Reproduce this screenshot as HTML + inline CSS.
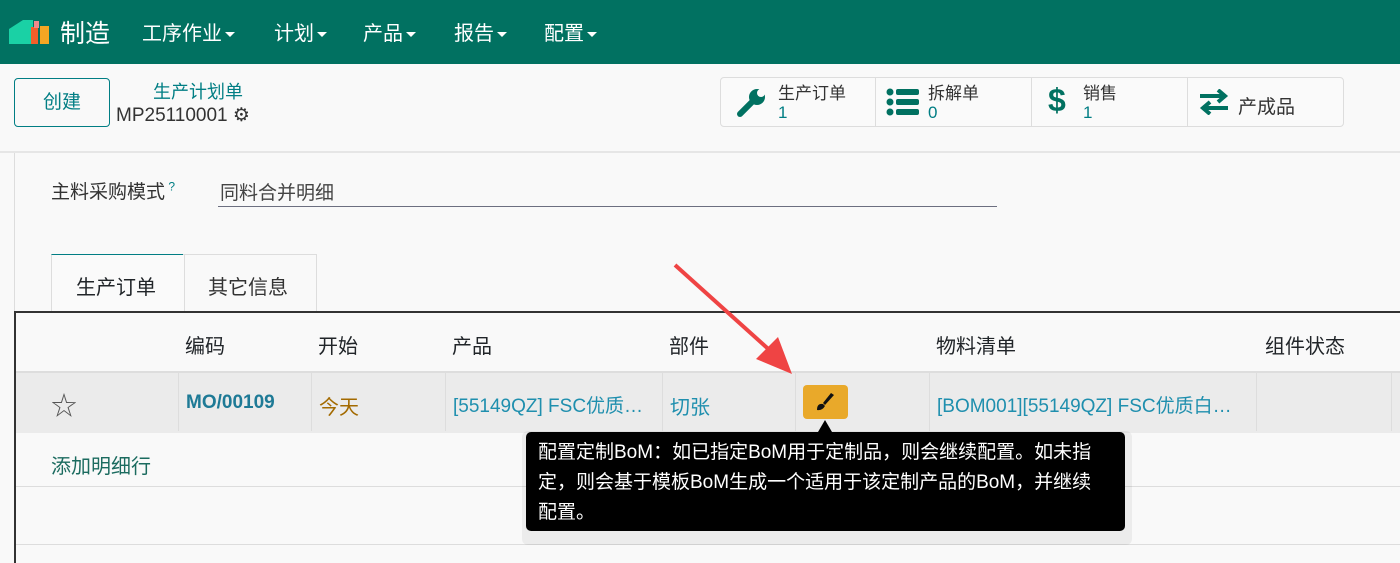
<!DOCTYPE html>
<html><head><meta charset="utf-8"><style>
body{margin:0;width:1400px;height:550px;overflow:hidden;background:#f9f9f9;font-family:"Liberation Sans","Noto Sans CJK SC",sans-serif;position:relative;color:#212529}
.a{position:absolute;white-space:nowrap}
.nav{position:absolute;left:0;top:0;width:1400px;height:64px;background:#017161}
.nav .a{color:#fff;font-size:20px;top:17px}
.car{display:inline-block;border-left:5px solid transparent;border-right:5px solid transparent;border-top:5px solid #fff;vertical-align:middle;margin-left:3px}
.teal{color:#017e84}
</style></head><body>
<div class="nav">
 <svg class="a" style="left:9px;top:17px" width="42" height="28"><polygon points="0,12 14,3 14,27 0,27" fill="#1ad1a5"/><rect x="14" y="3" width="10" height="24" fill="#1ad1a5"/><rect x="22" y="10" width="7" height="17" fill="#f25f2a"/><rect x="25" y="4" width="5" height="7" fill="#f08b8b"/><rect x="31" y="9" width="9" height="18" fill="#f5a623"/></svg>
 <div class="a" style="left:60px;top:14px;font-size:25px">制造</div>
 <div class="a" style="left:142px">工序作业<span class="car"></span></div>
 <div class="a" style="left:274px">计划<span class="car"></span></div>
 <div class="a" style="left:363px">产品<span class="car"></span></div>
 <div class="a" style="left:454px">报告<span class="car"></span></div>
 <div class="a" style="left:544px">配置<span class="car"></span></div>
</div>
<div class="a" style="left:14px;top:78px;width:94px;height:47px;border:1px solid #017e84;border-radius:4px;text-align:center;line-height:47px;font-size:19px;color:#017e84">创建</div>
<div class="a" style="left:153px;top:78px;font-size:18px;color:#017e84">生产计划单</div>
<div class="a" style="left:116px;top:104px;font-size:19px;color:#333">MP25110001 <span style="font-size:19px">⚙</span></div>
<div class="a" style="left:720px;top:77px;width:622px;height:48px;border:1px solid #ddd;border-radius:4px;background:#fafafa"></div>
<div class="a" style="left:875px;top:78px;width:1px;height:48px;background:#ddd"></div>
<div class="a" style="left:1031px;top:78px;width:1px;height:48px;background:#ddd"></div>
<div class="a" style="left:1187px;top:78px;width:1px;height:48px;background:#ddd"></div>
<svg class="a" style="left:736px;top:86px" width="32" height="32" viewBox="0 0 32 32"><path d="M4 28 L16 16" stroke="#017161" stroke-width="6" stroke-linecap="round"/><circle cx="21" cy="11" r="8" fill="#017161"/><circle cx="25" cy="7" r="4" fill="#fafafa"/></svg>
<div class="a" style="left:778px;top:84px;font-size:17px;line-height:19px;color:#333">生产订单<br><span class="teal">1</span></div>
<svg class="a" style="left:886px;top:88px" width="34" height="28"><circle cx="4" cy="4" r="3.5" fill="#017161"/><circle cx="4" cy="14" r="3.5" fill="#017161"/><circle cx="4" cy="24" r="3.5" fill="#017161"/><rect x="10" y="1" width="23" height="6" rx="2" fill="#017161"/><rect x="10" y="11" width="23" height="6" rx="2" fill="#017161"/><rect x="10" y="21" width="23" height="6" rx="2" fill="#017161"/></svg>
<div class="a" style="left:928px;top:84px;font-size:17px;line-height:19px;color:#333">拆解单<br><span class="teal">0</span></div>
<div class="a" style="left:1048px;top:82px;font-size:32px;font-weight:bold;color:#017161">$</div>
<div class="a" style="left:1083px;top:84px;font-size:17px;line-height:19px;color:#333">销售<br><span class="teal">1</span></div>
<svg class="a" style="left:1198px;top:89px" width="32" height="26"><path d="M2 7 H26 M20 1 L27 7 L20 13" stroke="#017161" stroke-width="4" fill="none"/><path d="M30 19 H6 M12 13 L5 19 L12 25" stroke="#017161" stroke-width="4" fill="none"/></svg>
<div class="a" style="left:1238px;top:92px;font-size:19px;color:#333">产成品</div>
<div class="a" style="left:0;top:151px;width:1400px;height:2px;background:#e6e6e6"></div>
<div class="a" style="left:14px;top:153px;width:1px;height:160px;background:#ddd"></div>
<div class="a" style="left:51px;top:177px;font-size:19px;color:#333">主料采购模式<sup style="color:#017e84;font-size:12px"> ?</sup></div>
<div class="a" style="left:220px;top:178px;font-size:19px;color:#444">同料合并明细</div>
<div class="a" style="left:218px;top:206px;width:779px;height:1px;background:#6c6f80"></div>
<div class="a" style="left:51px;top:254px;width:132px;height:58px;border:1px solid #ddd;border-top-color:#017e84;border-bottom:none;background:#fafafa"></div>
<div class="a" style="left:183px;top:254px;width:133px;height:58px;border:1px solid #ddd;border-left:none;border-bottom:none"></div>
<div class="a" style="left:76px;top:271px;font-size:20px">生产订单</div>
<div class="a" style="left:208px;top:271px;font-size:20px;color:#333">其它信息</div>
<div class="a" style="left:14px;top:311px;width:1390px;height:250px;border-top:2px solid #333;border-left:2px solid #333"></div>
<div class="a" style="left:16px;top:371px;width:1384px;height:60px;background:#ebebeb;border-top:2px solid #ddd"></div>
<div class="a" style="left:16px;top:486px;width:1384px;height:1px;background:#ddd"></div>
<div class="a" style="left:16px;top:544px;width:1384px;height:1px;background:#ddd"></div>
<div class="a" style="top:330px;left:185px;font-size:20px">编码</div>
<div class="a" style="top:330px;left:318px;font-size:20px">开始</div>
<div class="a" style="top:330px;left:452px;font-size:20px">产品</div>
<div class="a" style="top:330px;left:669px;font-size:20px">部件</div>
<div class="a" style="top:330px;left:936px;font-size:20px">物料清单</div>
<div class="a" style="top:330px;left:1265px;font-size:20px">组件状态</div>
<div class="a" style="left:178px;top:373px;width:1px;height:58px;background:#ddd"></div>
<div class="a" style="left:311px;top:373px;width:1px;height:58px;background:#ddd"></div>
<div class="a" style="left:445px;top:373px;width:1px;height:58px;background:#ddd"></div>
<div class="a" style="left:662px;top:373px;width:1px;height:58px;background:#ddd"></div>
<div class="a" style="left:795px;top:373px;width:1px;height:58px;background:#ddd"></div>
<div class="a" style="left:929px;top:373px;width:1px;height:58px;background:#ddd"></div>
<div class="a" style="left:1256px;top:373px;width:1px;height:58px;background:#ddd"></div>
<div class="a" style="left:1391px;top:373px;width:1px;height:58px;background:#ddd"></div>
<div class="a" style="left:51px;top:386px;font-size:26px;color:#555">☆</div>
<div class="a" style="left:186px;top:392px;font-size:19px;font-weight:bold;color:#1e7a96">MO/00109</div>
<div class="a" style="left:319px;top:391px;font-size:20px;color:#a36a00">今天</div>
<div class="a" style="left:453px;top:391px;font-size:19px;color:#1f8fae">[55149QZ] FSC优质…</div>
<div class="a" style="left:670px;top:391px;font-size:20px;color:#1f8fae">切张</div>
<div class="a" style="left:803px;top:385px;width:45px;height:34px;background:#e9a92a;border-radius:4px"></div>
<svg class="a" style="left:813px;top:391px" width="24" height="22"><path d="M18 2 L21 4 L12 14 L10 12Z" fill="#111"/><path d="M10 13 Q4 12 4 19 Q9 20 12 15Z" fill="#111"/></svg>
<div class="a" style="left:937px;top:391px;font-size:19px;color:#1f8fae">[BOM001][55149QZ] FSC优质白…</div>
<div class="a" style="left:51px;top:450px;font-size:20px;color:#1b6b5f">添加明细行</div>
<div class="a" style="left:522px;top:431px;width:610px;height:114px;background:rgba(0,0,0,0.05);border-radius:6px"></div>
<div class="a" style="left:526px;top:432px;width:599px;height:99px;background:#000;border-radius:5px"></div>
<div class="a" style="left:818px;top:420px;border-left:7px solid transparent;border-right:7px solid transparent;border-bottom:12px solid #000"></div>
<div class="a" style="left:538px;top:438px;font-size:19px;line-height:30px;color:#fff">配置定制BoM：如已指定BoM用于定制品，则会继续配置。如未指<br>定，则会基于模板BoM生成一个适用于该定制产品的BoM，并继续<br>配置。</div>
<svg class="a" style="left:660px;top:255px" width="150" height="130"><line x1="15" y1="10" x2="115" y2="100" stroke="#ef4444" stroke-width="4"/><polygon points="132,119 96,104 118,82" fill="#ef4444"/></svg>
</body></html>
